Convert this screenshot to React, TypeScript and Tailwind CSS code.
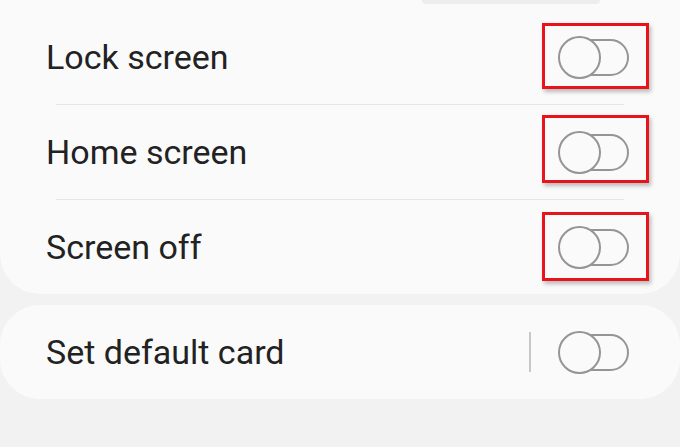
import React from "react";

function Toggle({ box }: { box?: { top: number; h: number } }) {
  return (
    <div className="relative w-[70px] h-[37px] shrink-0">
      {box && (
        <div
          className="absolute left-[-17px] w-[107px] border-[3px] border-[#e8141b] shadow-[2px_3px_4px_rgba(0,0,0,0.25)]"
          style={{ top: box.top, height: box.h }}
        />
      )}
      <div className="absolute inset-0 rounded-full border-2 border-[#959595]" />
      <div className="absolute left-[-1px] top-[-3px] w-[43px] h-[43px] rounded-full border-2 border-[#959595] bg-[#fafafa]" />
    </div>
  );
}

function Row({ label, box }: { label: string; box: { top: number; h: number } }) {
  return (
    <div className="h-[94px] flex items-center pl-[46px] pr-[51px]">
      <span className="flex-1 text-[34px] text-[#222222] leading-none">{label}</span>
      <Toggle box={box} />
    </div>
  );
}

export default function App() {
  return (
    <div
      className="relative w-[680px] h-[447px] bg-[#f2f2f2] overflow-hidden flex flex-col"
      style={{ fontFamily: "Roboto, 'Noto Sans', sans-serif" }}
    >
      <div className="bg-[#fafafa] rounded-b-[40px] pt-[10px]">
        <Row label="Lock screen" box={{ top: -16, h: 66 }} />
        <div className="mx-[56px] h-px bg-[#e6e6e6]" />
        <Row label="Home screen" box={{ top: -19, h: 68 }} />
        <div className="mx-[56px] h-px bg-[#e6e6e6]" />
        <Row label="Screen off" box={{ top: -17, h: 69 }} />
      </div>
      <div className="mt-[11px] bg-[#fafafa] rounded-[40px] h-[94px] flex items-center pl-[46px] pr-[51px]">
        <span className="flex-1 text-[34px] text-[#222222] leading-none">Set default card</span>
        <div className="w-[2px] h-[40px] bg-[#c8c8c8] mr-[28px]" />
        <Toggle />
      </div>
      <div className="absolute left-[422px] top-0 w-[178px] h-[4px] rounded-b-[4px] bg-[#ededed]" />
    </div>
  );
}
